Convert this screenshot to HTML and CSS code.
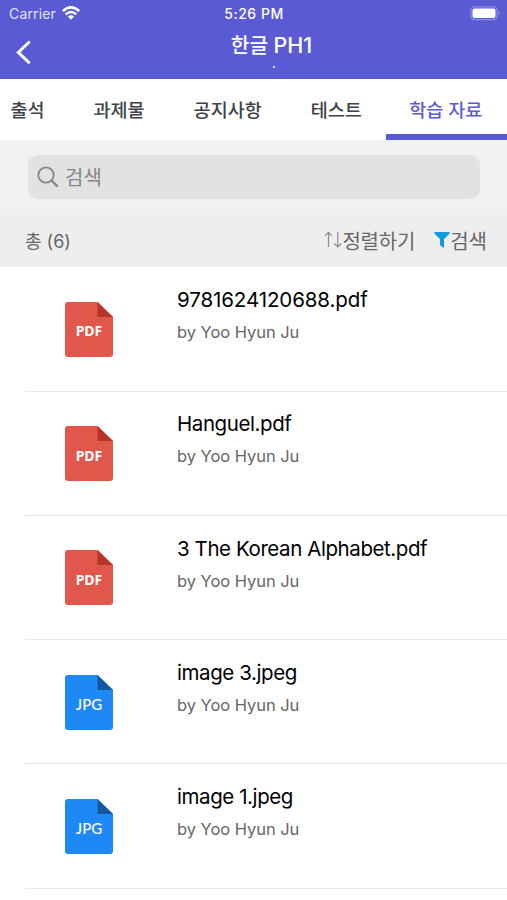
FILE: index.html
```html
<!DOCTYPE html>
<html lang="ko">
<head>
<meta charset="utf-8">
<title>한글 PH1</title>
<link rel="stylesheet" href="styles.css">
</head>
<body>
<svg class="defs" width="0" height="0" aria-hidden="true">
  <symbol id="file" viewBox="0 0 48 55">
    <path d="M3 0H32.500L48 15V52Q48 55 45 55H3Q0 55 0 52V3Q0 0 3 0Z" fill="currentColor"/>
    <path class="fold" d="M32.500 0L48 15H32.500Z"/>
  </symbol>
</svg>
<header class="header">
  <div class="status">
    <div class="carrier"><span>Carrier</span>
      <svg width="18" height="14" viewBox="0 0 18 14" fill="none" stroke="#fff" stroke-width="2.500"><path d="M.8 5.100Q9-2.300 17.200 5.100M3.700 8.400Q9 3.700 14.300 8.400"/><path d="M9 13.800L5.700 10.600Q9 7.900 12.300 10.600Z" fill="#fff" stroke="none"/></svg>
    </div>
    <time class="time">5:26 PM</time>
    <svg class="battery" width="31" height="15" viewBox="0 0 31 15"><rect x=".8" y=".8" width="26.400" height="12.900" rx="4" fill="none" stroke="#8a8be3" stroke-width="1.200"/><rect x="2.500" y="2.500" width="23" height="9.500" rx="2" fill="#fff"/><path d="M28.600 5.300Q30.500 7.200 28.600 9.200Z" fill="#9a9be8"/></svg>
  </div>
  <div class="nav">
    <svg class="back" width="16" height="25" viewBox="0 0 16 25" fill="none" stroke="#fff" stroke-width="2.900"><path d="M13.700 1.500L2.300 12.400L13.700 23.300"/></svg>
    <div class="heading"><h1>한글 <span class="latin">PH1</span></h1><span class="dot"></span></div>
  </div>
</header>
<nav class="tabs">
  <a class="tab">출석</a><a class="tab">과제물</a><a class="tab">공지사항</a><a class="tab">테스트</a><a class="tab active">학습 자료</a>
</nav>
<div class="search">
  <div class="field">
    <svg width="22" height="22" viewBox="0 0 22 22" fill="none" stroke="#858587" stroke-width="1.800"><circle cx="9" cy="9" r="7.700"/><path d="M14.500 14.500L20.700 20.600" stroke-width="2.400"/></svg>
    <span>검색</span>
  </div>
</div>
<div class="toolbar">
  <span class="total">총 (6)</span>
  <span class="action sort"><svg width="18" height="18" viewBox="0 0 18 18" fill="none" stroke="#8c8c8c" stroke-width="1.200"><path d="M4.500 16V1.500M1 4.800L4.500 1.300L8 4.800M13.800 1V15.800M10.300 12.500L13.800 16L17.300 12.500"/></svg><span>정렬하기</span></span>
  <span class="action"><svg width="16" height="16" viewBox="0 0 16 16"><path d="M.8 0H15.200Q16 .7 15.500 1.400L10 7V14.800Q9.500 16 8.700 15.400L6 13.100V7L.5 1.400Q0 .7 .8 0Z" fill="#0c9bdd"/></svg><span>검색</span></span>
</div>
<main class="list">
  <article class="item"><div class="icon pdf"><svg width="48" height="55"><use href="#file"/></svg><b>PDF</b></div><div class="info"><h2 class="numeric">9781624120688.pdf</h2><p>by Yoo Hyun Ju</p></div></article>
  <article class="item"><div class="icon pdf"><svg width="48" height="55"><use href="#file"/></svg><b>PDF</b></div><div class="info"><h2>Hanguel.pdf</h2><p>by Yoo Hyun Ju</p></div></article>
  <article class="item"><div class="icon pdf"><svg width="48" height="55"><use href="#file"/></svg><b>PDF</b></div><div class="info"><h2>3 The Korean Alphabet.pdf</h2><p>by Yoo Hyun Ju</p></div></article>
  <article class="item"><div class="icon jpg"><svg width="48" height="55"><use href="#file"/></svg><b>JPG</b></div><div class="info"><h2>image 3.jpeg</h2><p>by Yoo Hyun Ju</p></div></article>
  <article class="item"><div class="icon jpg"><svg width="48" height="55"><use href="#file"/></svg><b>JPG</b></div><div class="info"><h2>image 1.jpeg</h2><p>by Yoo Hyun Ju</p></div></article>
</main>
</body>
</html>
```
FILE: styles.css
```css
* { box-sizing: border-box; }
body {
  margin: 0;
  width: 507px;
  height: 900px;
  overflow: hidden;
  background: #fff;
  font-family: Inter, "Noto Sans CJK KR", sans-serif;
  color: #000;
}
svg { display: block; flex: none; }
h1, h2, p { margin: 0; }
.defs { position: absolute; }
.header { height: 79px; background: #5a5bd4; color: #fff; }
.status { height: 28px; display: grid; grid-template-columns: 1fr auto 1fr; align-items: center; padding: 0 7px 0 9px; line-height: 28px; }
.carrier { display: flex; align-items: center; gap: 6px; font-size: 14px; color: #e4e4fb; letter-spacing: .15px; }
.carrier svg { margin-top: -2px; }
.time { font-size: 14px; font-weight: 500; letter-spacing: .5px; margin-left: -1px; }
.battery { justify-self: end; margin-top: -1px; margin-right: -1px; }
.nav { height: 51px; display: grid; grid-template-columns: 40px 1fr 0; padding-left: 16px; }
.back { margin-top: 12px; }
.heading { display: flex; flex-direction: column; align-items: center; padding-right: 18px; }
h1 { font-size: 20.300px; font-weight: 500; line-height: 34px; white-space: nowrap; margin-left: -2px; }
.latin { font-size: 21.500px; font-weight: 500; }
.dot { width: 2px; height: 2px; background: #d9d9fa; margin: 3px 0 0 2px; }
.tabs { display: flex; height: 61px; margin-left: -14px; width: 521px; overflow: hidden; }
.tab { flex: none; padding: 0 24.500px; font-size: 18.500px; font-weight: 500; line-height: 62px; color: #3d4248; white-space: nowrap; }
.tab.active { color: #5a5bd4; border-bottom: 6px solid #5a5bd4; padding-left: 23px; }
.search { height: 74px; padding: 15px 27px 0 28px; background: #f1f1f1; }
.field { height: 44px; border-radius: 10px; background: #e2e2e2; display: flex; align-items: center; padding-left: 9px; gap: 6px; font-size: 20px; line-height: 28px; color: #858587; }
.field span { margin-top: 2px; }
.toolbar { height: 53px; background: #eee; display: flex; align-items: center; padding: 0 20px 0 25px; color: #666; }
.total { font-size: 18px; margin: -2px auto 0 0; }
.action { display: flex; align-items: center; font-size: 20px; }
.action svg { margin-top: -1px; }
.sort { margin-right: 19px; letter-spacing: -.2px; }
.list { padding-top: .4px; }
.item { height: 124.250px; margin-left: 25px; border-bottom: 1px solid #e9e9e9; display: flex; padding-left: 40px; }
.icon { display: grid; width: 48px; height: 55px; margin: 34.500px 64px 0 0; }
.icon > * { grid-area: 1 / 1; }
.icon b { align-self: center; justify-self: center; color: #fff; margin-top: 3px; position: relative; }
.pdf { color: #e2574c; --fold: #b53629; }
.jpg { color: #1e88f5; --fold: #1459a0; }
.fold { fill: var(--fold); }
.pdf b { font: 700 14px "Noto Sans", sans-serif; }
.jpg b { font: 500 15px Lato, sans-serif; }
h2 { font-size: 20.500px; font-weight: 400; line-height: 26px; margin-top: 19.700px; white-space: nowrap; letter-spacing: -.42px; }
.numeric { letter-spacing: -.1px; }
p { font-size: 16.500px; line-height: 22px; margin-top: 8px; color: #666; letter-spacing: -.05px; }
```
